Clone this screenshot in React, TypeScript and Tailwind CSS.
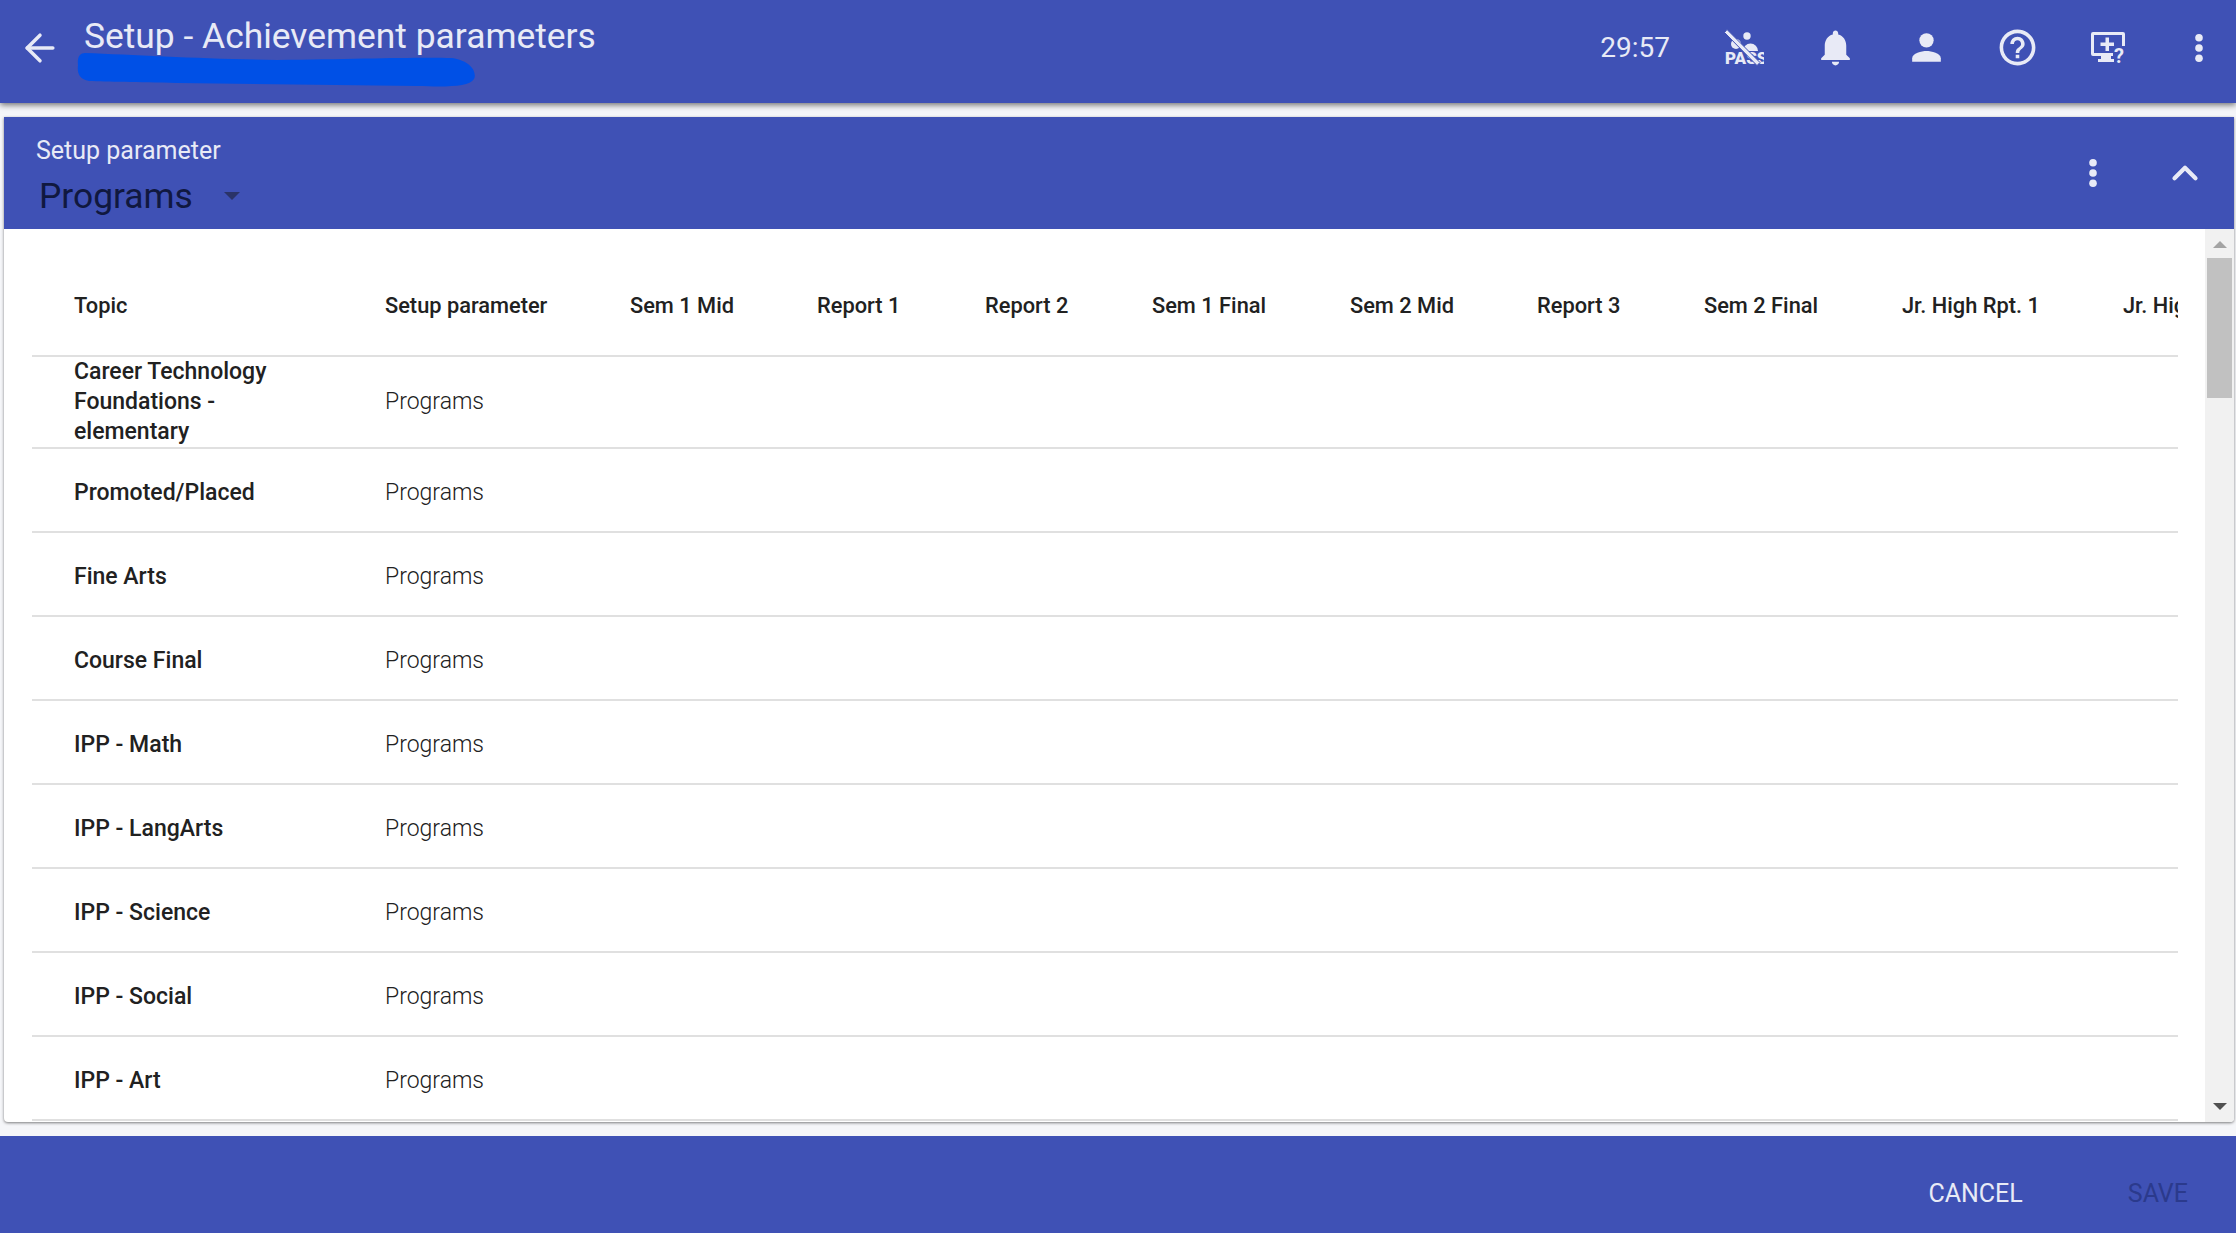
import { ArrowLeft, ChevronUp } from "lucide-react"

const COLUMNS = [
  "Topic",
  "Setup parameter",
  "Sem 1 Mid",
  "Report 1",
  "Report 2",
  "Sem 1 Final",
  "Sem 2 Mid",
  "Report 3",
  "Sem 2 Final",
  "Jr. High Rpt. 1",
  "Jr. High Rpt. 2",
]

const ROWS = [
  "Career Technology Foundations - elementary",
  "Promoted/Placed",
  "Fine Arts",
  "Course Final",
  "IPP - Math",
  "IPP - LangArts",
  "IPP - Science",
  "IPP - Social",
  "IPP - Art",
]

const GRID = "grid grid-cols-[353px_245px_187px_168px_167px_198px_187px_167px_198px_221px_200px] w-max"

function Dots() {
  return (
    <svg viewBox="0 0 24 24" className="w-[38px] h-[38px] fill-[#e8eaf6]">
      <circle cx="12" cy="5.5" r="2.4" />
      <circle cx="12" cy="12" r="2.4" />
      <circle cx="12" cy="18.5" r="2.4" />
    </svg>
  )
}

function PassOffIcon() {
  return (
    <svg viewBox="0 0 40 40" className="w-10 h-10 fill-[#e8eaf6]">
      <circle cx="23" cy="8" r="3.7" />
      <circle cx="12" cy="16" r="5" />
      <path d="M19 23a7.500 7.500 0 1 1 15 0z" />
      <text x="1" y="36" fontFamily="Roboto, sans-serif" fontWeight="900" fontSize="17">PASS</text>
      <path d="M3 1.500 L0.500 4.500 L33 37.500 L36 34.500 Z" stroke="#3f51b5" strokeWidth="1" />
    </svg>
  )
}

function BellIcon() {
  return (
    <svg viewBox="0 0 24 24" className="w-[43px] h-[43px] fill-[#e8eaf6]">
      <path d="M12 22c1.100 0 2-.9 2-2h-4c0 1.100.89 2 2 2zm6-6v-5c0-3.070-1.640-5.640-4.500-6.320V4c0-.83-.67-1.500-1.500-1.500s-1.500.67-1.500 1.500v.68C7.630 5.360 6 7.920 6 11v5l-2 2v1h16v-1l-2-2z" />
    </svg>
  )
}

function PersonIcon() {
  return (
    <svg viewBox="0 0 24 24" className="w-[43px] h-[43px] fill-[#e8eaf6]">
      <circle cx="12" cy="8" r="4" />
      <path d="M4 20v-2c0-2.700 5.300-4 8-4s8 1.300 8 4v2z" />
    </svg>
  )
}

function HelpIcon() {
  return (
    <svg viewBox="0 0 24 24" className="w-[43px] h-[43px] shrink-0 fill-[#e8eaf6]">
      <path d="M11 18h2v-2h-2v2zm1-16C6.480 2 2 6.480 2 12s4.480 10 10 10 10-4.480 10-10S17.520 2 12 2zm0 18c-4.410 0-8-3.590-8-8s3.590-8 8-8 8 3.590 8 8-3.590 8-8 8zm0-14c-2.210 0-4 1.790-4 4h2c0-1.100.9-2 2-2s2 .9 2 2c0 2-3 1.750-3 5h2c0-2.250 3-2.500 3-5 0-2.210-1.790-4-4-4z" />
    </svg>
  )
}

function ScreenHelpIcon() {
  return (
    <svg viewBox="0 0 40 40" className="w-10 h-10 fill-[#e8eaf6]">
      <path d="M5 4h30a2 2 0 0 1 2 2v12h-3V7H6v18h19v3H5a2 2 0 0 1-2-2V6a2 2 0 0 1 2-2z" />
      <path d="M17.500 9.500h3.500v5h5v3.500h-5v5h-3.500v-5h-5v-3.500h5z" />
      <path d="M13 28h10v3h3v3H10v-3h3z" />
      <text x="26" y="35" fontFamily="Roboto, sans-serif" fontWeight="700" fontSize="20">?</text>
    </svg>
  )
}

const TOP_ICONS = [PassOffIcon, BellIcon, PersonIcon, HelpIcon, ScreenHelpIcon, Dots]

export default function App() {
  return (
    <div className="h-[1233px] w-[2236px] overflow-hidden flex flex-col bg-[#f5f6f9] font-['Roboto',sans-serif]">
      <header className="relative h-[103px] shrink-0 bg-[#3f51b5] text-[#e8eaf6] flex items-center pl-[18px] pr-[15px] shadow-[0_2px_6px_rgba(0,0,0,0.55)]">
        <ArrowLeft className="w-[44px] h-[44px] mt-[-8px] mr-[22px]" strokeWidth={1.9} />
        <div className="relative self-start pt-[15px]">
          <div className="text-[35.4px] leading-[42px]">Setup - Achievement parameters</div>
          {/* redaction scribble over the subtitle */}
          <svg viewBox="0 0 400 34" className="absolute left-[-7px] top-[53px] w-[400px] h-[34px] fill-[#0050e6]">
            <path d="M8 0C60 2 130 6 200 7C280 6 340 4 375 5C395 8 400 20 397 26C392 34 370 34 340 33C260 32 180 31 100 30C60 29 30 29 12 28C2 26 0 20 1 12C0 4 3 0 8 0Z" />
          </svg>
        </div>
        <div className="ml-auto flex items-center">
          <span className="text-[28px] mr-[52px] mt-[-7px]">29:57</span>
          <div className="flex items-center gap-[47px] mt-[-8px]">
            {TOP_ICONS.map((Icon, i) => (
              <div key={i} className="w-[44px] flex justify-center">
                <Icon />
              </div>
            ))}
          </div>
        </div>
      </header>

      <main className="mt-[14px] ml-[4px] mr-[2px] h-[1005px] shrink-0 flex flex-col bg-white rounded-b-[4px] shadow-[0_1px_3px_rgba(0,0,0,0.5)] overflow-hidden">
        <div className="h-[112px] shrink-0 bg-[#3f51b5] flex items-center pl-[32px] pr-[28px]">
          <div className="pt-[6px]">
            <div className="text-[25px] leading-[30px] text-[#e8eaf6]">Setup parameter</div>
            <div className="flex items-center ml-[3px] mt-[10px] text-[35.4px] leading-[40px] text-[#10183f]">
              Programs
              <span className="ml-[31px] border-x-[8px] border-x-transparent border-t-[8px] border-t-[#2a3368]" />
            </div>
          </div>
          <div className="ml-auto flex items-center gap-[52px] text-[#e8eaf6]">
            <Dots />
            <ChevronUp className="w-[42px] h-[42px]" strokeWidth={2.4} />
          </div>
        </div>

        <div className="flex-1 flex min-h-0">
          <div className="flex-1 min-w-0 pl-[28px] pr-[27px] overflow-hidden">
            <div className="overflow-hidden">
              <div className={`${GRID} h-[128px] items-center pt-[29px] border-b-2 border-[#e0e0e0] text-[21.8px] font-medium text-[#212121]`}>
                {COLUMNS.map((c, i) => (
                  <div key={c} className={i === 0 ? "pl-[42px]" : ""}>
                    {c}
                  </div>
                ))}
              </div>
              {ROWS.map((topic, idx) => (
                <div
                  key={topic}
                  className={`${GRID} items-center border-b-2 border-[#e0e0e0] ${idx === 0 ? "h-[92px]" : "h-[84px] pt-[6px]"}`}
                >
                  <div className="pl-[42px] pr-[60px] text-[23px] leading-[30px] font-medium text-[#212121]">{topic}</div>
                  <div className="text-[23px] font-light text-[#212121]">Programs</div>
                </div>
              ))}
            </div>
          </div>
          <div className="w-[29px] shrink-0 bg-[#f1f1f1] flex flex-col items-center pt-[12px]">
            <span className="border-x-[7px] border-x-transparent border-b-[7px] border-b-[#a3a3a3]" />
            <div className="mt-[10px] h-[140px] w-[25px] bg-[#c1c1c1]" />
            <div className="flex-1" />
            <span className="mb-[12px] border-x-[7px] border-x-transparent border-t-[7px] border-t-[#505050]" />
          </div>
        </div>
      </main>

      <footer className="mt-[14px] flex-1 bg-[#3f51b5] flex items-center justify-end pr-[48px] text-[25px] pt-[18px]">
        <span className="text-[#e8eaf6] mr-[105px]">CANCEL</span>
        <span className="text-[#2b3a8c]">SAVE</span>
      </footer>
    </div>
  )
}
